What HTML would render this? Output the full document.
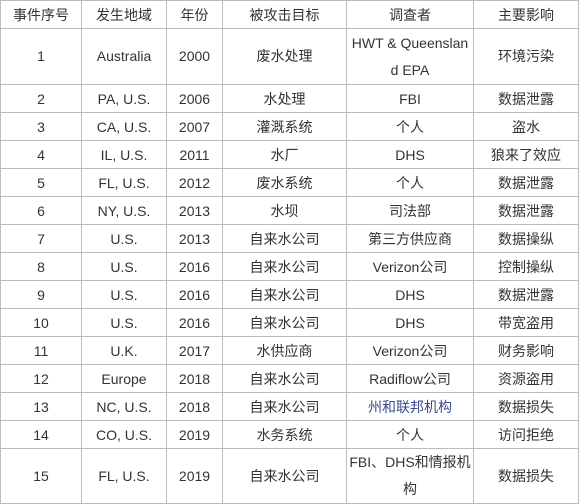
<!DOCTYPE html>
<html><head><meta charset="utf-8"><style>
body{margin:0;background:#fff;}
table{position:absolute;left:0;top:0;border-collapse:collapse;table-layout:fixed;width:578px;font-family:"Liberation Sans","Noto Sans CJK SC",sans-serif;font-size:14px;color:#333;}
td{border:1px solid #bbb;text-align:center;vertical-align:middle;padding:0 2px;line-height:20px;height:27px;word-break:break-all;}
tr.t td{height:55px;line-height:27px;}
tr.t.l td{height:53px;line-height:27px;}
</style></head><body>
<table>
<colgroup><col style="width:81px"><col style="width:85px"><col style="width:56px"><col style="width:124px"><col style="width:127px"><col style="width:105px"></colgroup>
<tr><td>事件序号</td><td>发生地域</td><td>年份</td><td>被攻击目标</td><td>调查者</td><td>主要影响</td></tr>
<tr class="t"><td>1</td><td>Australia</td><td>2000</td><td>废水处理</td><td>HWT &amp; Queensland EPA</td><td>环境污染</td></tr>
<tr><td>2</td><td>PA, U.S.</td><td>2006</td><td>水处理</td><td>FBI</td><td>数据泄露</td></tr>
<tr><td>3</td><td>CA, U.S.</td><td>2007</td><td>灌溉系统</td><td>个人</td><td>盗水</td></tr>
<tr><td>4</td><td>IL, U.S.</td><td>2011</td><td>水厂</td><td>DHS</td><td>狼来了效应</td></tr>
<tr><td>5</td><td>FL, U.S.</td><td>2012</td><td>废水系统</td><td>个人</td><td>数据泄露</td></tr>
<tr><td>6</td><td>NY, U.S.</td><td>2013</td><td>水坝</td><td>司法部</td><td>数据泄露</td></tr>
<tr><td>7</td><td>U.S.</td><td>2013</td><td>自来水公司</td><td>第三方供应商</td><td>数据操纵</td></tr>
<tr><td>8</td><td>U.S.</td><td>2016</td><td>自来水公司</td><td>Verizon公司</td><td>控制操纵</td></tr>
<tr><td>9</td><td>U.S.</td><td>2016</td><td>自来水公司</td><td>DHS</td><td>数据泄露</td></tr>
<tr><td>10</td><td>U.S.</td><td>2016</td><td>自来水公司</td><td>DHS</td><td>带宽盗用</td></tr>
<tr><td>11</td><td>U.K.</td><td>2017</td><td>水供应商</td><td>Verizon公司</td><td>财务影响</td></tr>
<tr><td>12</td><td>Europe</td><td>2018</td><td>自来水公司</td><td>Radiflow公司</td><td>资源盗用</td></tr>
<tr><td>13</td><td>NC, U.S.</td><td>2018</td><td>自来水公司</td><td style="color:#3a4a8a">州和联邦机构</td><td>数据损失</td></tr>
<tr><td>14</td><td>CO, U.S.</td><td>2019</td><td>水务系统</td><td>个人</td><td>访问拒绝</td></tr>
<tr class="t l"><td>15</td><td>FL, U.S.</td><td>2019</td><td>自来水公司</td><td>FBI、DHS和情报机<br>构</td><td>数据损失</td></tr>
</table>
</body></html>
